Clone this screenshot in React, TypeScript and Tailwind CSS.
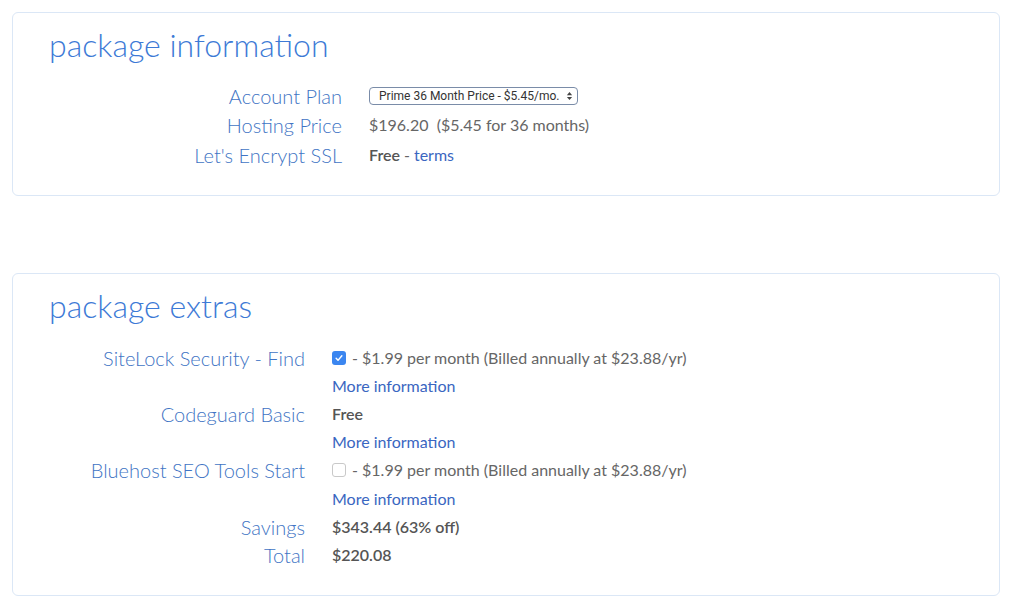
import React from 'react';

// fonts and colours picked from the screenshot
const font = { fontFamily: 'Lato, "Open Sans", sans-serif' };

function Label({ children }: { children?: React.ReactNode }) {
  return (
    <div className="text-right text-[20px] font-light text-[#4174c4] whitespace-nowrap">{children}</div>
  );
}

function Value({ children }: { children?: React.ReactNode }) {
  return <div className="flex items-center text-[16px] text-[#666] whitespace-nowrap">{children}</div>;
}

function Checkbox({ checked }: { checked?: boolean }) {
  if (checked) {
    return (
      <span className="mr-[6px] inline-flex h-[14px] w-[14px] items-center justify-center rounded-[3px] bg-[#3b86f0]">
        <svg viewBox="0 0 14 14" className="h-[10px] w-[10px]" fill="none" stroke="white" strokeWidth={2} strokeLinecap="round" strokeLinejoin="round">
          <path d="M3 7.5l2.6 2.8L11 3.8" />
        </svg>
      </span>
    );
  }
  return <span className="mr-[6px] inline-block h-[14px] w-[14px] rounded-[3px] border border-[#c9c9c9] bg-white" />;
}

function More() {
  return <a className="text-[16px] text-[#3a66c1] cursor-pointer">More information</a>;
}

export default function App() {
  return (
    <div className="min-h-screen bg-white px-[12px] pt-[12px]" style={font}>
      {/* package information */}
      <section className="w-[988px] rounded-[6px] border border-[#dbe7f6] pl-[36px] pt-[12px] pb-[25px]">
        <h2 className="text-[32px] font-light leading-[40px] text-[#3d7ad6]">package information</h2>
        <div className="mt-[16px] grid grid-cols-[293px_1fr] gap-x-[27px] auto-rows-[29.5px] items-center">
          <Label>Account Plan</Label>
          <Value>
            <span
              className="flex h-[18px] items-center gap-[7px] rounded-[4px] border border-[#7a8ca8] bg-white pl-[9px] pr-[4px] text-[12px] font-normal text-[#333]"
              style={{ fontFamily: 'Roboto, "Liberation Sans", sans-serif' }}
            >
              Prime 36 Month Price - $5.45/mo.
              <span className="flex flex-col items-center leading-none text-[#444]">
                <svg viewBox="0 0 8 10" className="h-[10px] w-[7px]" fill="currentColor">
                  <path d="M4 0.5L7 4H1z" />
                  <path d="M4 9.5L1 6h6z" />
                </svg>
              </span>
            </span>
          </Value>
          <Label>Hosting Price</Label>
          <Value>$196.20&nbsp;&nbsp;($5.45 for 36 months)</Value>
          <Label>Let's Encrypt SSL</Label>
          <Value>
            <span className="font-semibold text-[#555]">Free</span>
            <span className="mx-[4px]">-</span>
            <a className="text-[#3a66c1]">terms</a>
          </Value>
        </div>
      </section>

      {/* package extras */}
      <section className="mt-[77px] w-[988px] rounded-[6px] border border-[#dbe7f6] pl-[36px] pt-[12px] pb-[26px]">
        <h2 className="text-[32px] font-light leading-[40px] text-[#3d7ad6]">package extras</h2>
        <div className="mt-[18px] grid grid-cols-[256px_1fr] gap-x-[27px] auto-rows-[28.2px] items-center">
          <Label>SiteLock Security - Find</Label>
          <Value>
            <Checkbox checked />- $1.99 per month (Billed annually at $23.88/yr)
          </Value>
          <Label />
          <More />
          <Label>Codeguard Basic</Label>
          <Value>
            <span className="font-semibold text-[#555]">Free</span>
          </Value>
          <Label />
          <More />
          <Label>Bluehost SEO Tools Start</Label>
          <Value>
            <Checkbox />- $1.99 per month (Billed annually at $23.88/yr)
          </Value>
          <Label />
          <More />
          <Label>Savings</Label>
          <Value>
            <span className="font-semibold text-[#555]">$343.44 (63% off)</span>
          </Value>
          <Label>Total</Label>
          <Value>
            <span className="font-semibold text-[#555]">$220.08</span>
          </Value>
        </div>
      </section>
    </div>
  );
}
